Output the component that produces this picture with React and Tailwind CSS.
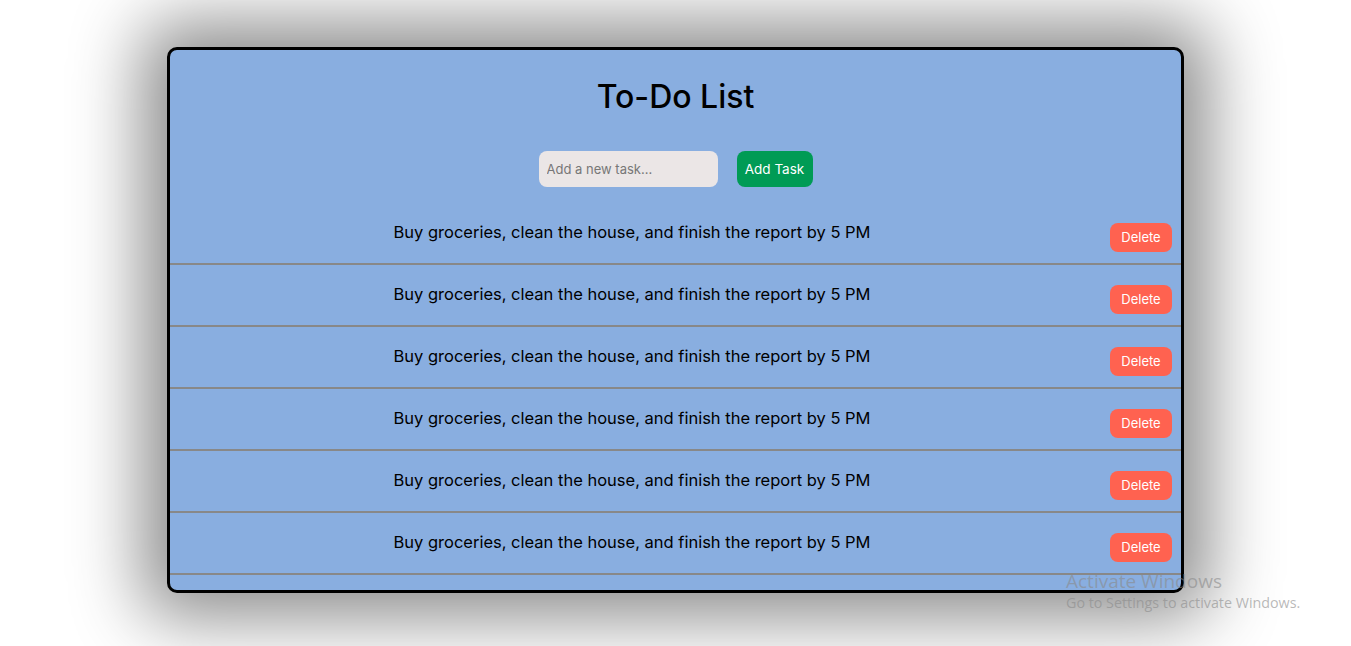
import { useState } from 'react'

const initialTasks = Array.from({ length: 7 }, (_, i) => ({
  id: i,
  text: 'Buy groceries, clean the house, and finish the report by 5 PM',
}))

export default function App() {
  const [tasks, setTasks] = useState(initialTasks)
  const [value, setValue] = useState('')

  const addTask = () => {
    if (!value.trim()) return
    setTasks([...tasks, { id: Date.now(), text: value }])
    setValue('')
  }

  const removeTask = (id) => setTasks(tasks.filter((t) => t.id !== id))

  return (
    <div className="relative h-[646px] w-full overflow-hidden bg-white pt-[47px] font-['Inter',sans-serif]">
      <div className="mx-auto flex h-[546px] w-[1017px] flex-col overflow-hidden rounded-[10px] border-[3px] border-black bg-[#89aee0] shadow-[0_0_70px_25px_rgba(0,0,0,0.45)]">
        <h1 className="mt-[25px] text-center text-[32px] font-medium leading-[44px] text-black">To-Do List</h1>

        <div className="mt-[32px] flex justify-center gap-[19px]">
          <input
            value={value}
            onChange={(e) => setValue(e.target.value)}
            placeholder="Add a new task..."
            className="h-[36px] w-[179px] rounded-[8px] bg-[#ebe6e6] px-[8px] text-[13px] text-black outline-none placeholder:text-[#777]"
          />
          <button
            type="button"
            onClick={addTask}
            className="h-[36px] w-[76px] rounded-[8px] bg-[#009b55] text-[13.5px] text-white"
          >
            Add Task
          </button>
        </div>

        <ul className="mt-[16px] flex-1 overflow-hidden">
          {tasks.map((t) => (
            <li key={t.id} className="flex h-[62px] items-start border-b-2 border-[#888] pr-[9px]">
              <span className="mr-[16px] mt-[17px] flex-1 text-center text-[16.5px] leading-[24px] text-black">{t.text}</span>
              <button
                type="button"
                onClick={() => removeTask(t.id)}
                className="mt-[20px] h-[29px] w-[62px] rounded-[8px] bg-[#ff6250] text-[13px] text-white"
              >
                Delete
              </button>
            </li>
          ))}
        </ul>
      </div>

      <div className="pointer-events-none absolute left-[1066px] top-[570px] text-[#8a8a8a]/60 font-['Open_Sans',sans-serif]">
        <p className="text-[19px] leading-[23px]">Activate Windows</p>
        <p className="text-[14.3px] leading-[20px]">Go to Settings to activate Windows.</p>
      </div>
    </div>
  )
}
